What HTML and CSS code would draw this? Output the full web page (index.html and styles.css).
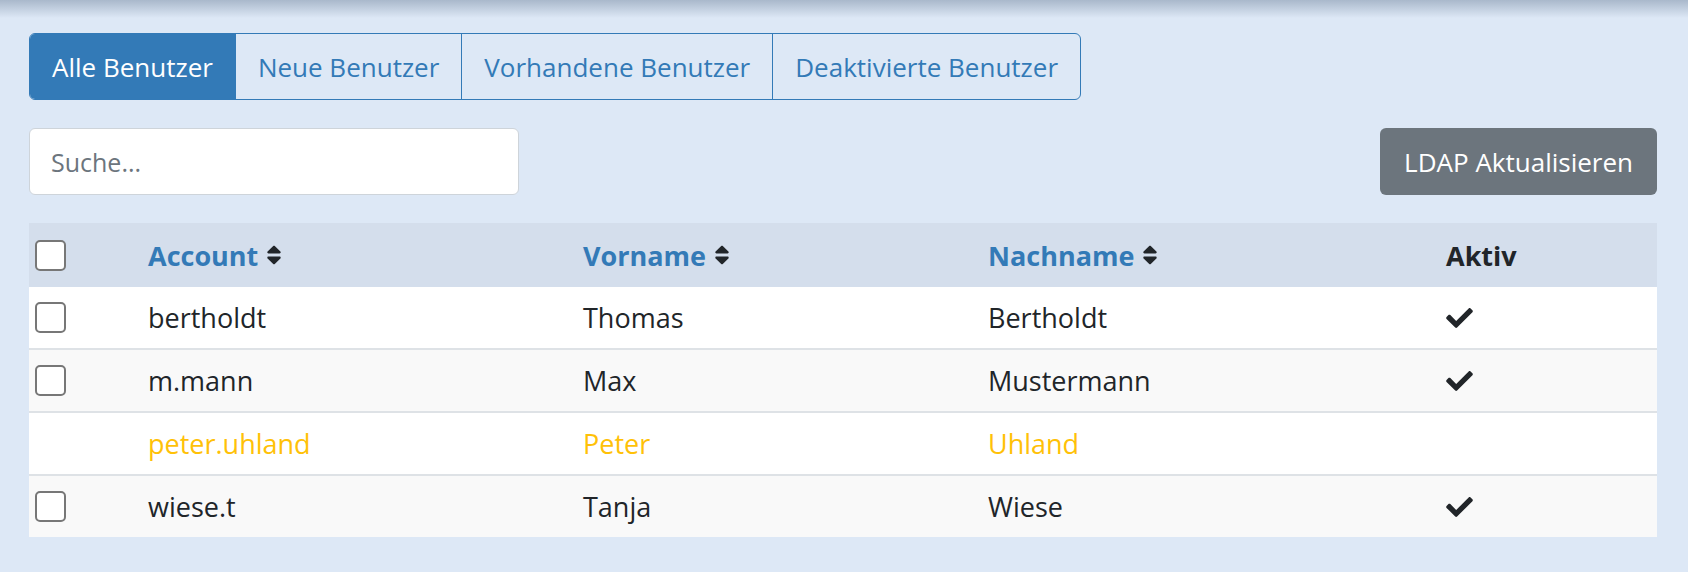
FILE: index.html
```html
<!DOCTYPE html>
<html lang="de">
<head>
  <meta charset="UTF-8" />
  <meta name="viewport" content="width=device-width, initial-scale=1.0"/>
  <title>Benutzerverwaltung</title>
  <link rel="stylesheet" href="styles.css">
</head>
<body>

  <div class="shade"></div>

  <div class="page">
    <div class="tabs">
      <button class="tab active">Alle Benutzer</button>
      <button class="tab">Neue Benutzer</button>
      <button class="tab">Vorhandene Benutzer</button>
      <button class="tab">Deaktivierte Benutzer</button>
    </div>

    <div class="toolbar">
      <input class="search" type="text" placeholder="Suche..." />
      <button class="ldap">LDAP Aktualisieren</button>
    </div>

    <table class="users">
      <colgroup>
        <col class="col-check">
        <col class="col-account">
        <col class="col-first">
        <col class="col-last">
        <col class="col-active">
      </colgroup>
      <thead>
        <tr>
          <th><span class="box"></span></th>
          <th><a class="sort">Account <svg viewBox="0 0 320 512" width="16" height="24"><path d="M41 288h238c21.4 0 32.1 25.9 17 41L177 448c-9.4 9.4-24.6 9.4-33.9 0L24 329c-15.1-15.1-4.4-41 17-41zm255-105L177 64c-9.4-9.4-24.6-9.4-33.9 0L24 183c-15.1 15.1-4.4 41 17 41h238c21.4 0 32.1-25.9 17-41z"/></svg></a></th>
          <th><a class="sort">Vorname <svg viewBox="0 0 320 512" width="16" height="24"><path d="M41 288h238c21.4 0 32.1 25.9 17 41L177 448c-9.4 9.4-24.6 9.4-33.9 0L24 329c-15.1-15.1-4.4-41 17-41zm255-105L177 64c-9.4-9.4-24.6-9.4-33.9 0L24 183c-15.1 15.1-4.4 41 17 41h238c21.4 0 32.1-25.9 17-41z"/></svg></a></th>
          <th><a class="sort">Nachname <svg viewBox="0 0 320 512" width="16" height="24"><path d="M41 288h238c21.4 0 32.1 25.9 17 41L177 448c-9.4 9.4-24.6 9.4-33.9 0L24 329c-15.1-15.1-4.4-41 17-41zm255-105L177 64c-9.4-9.4-24.6-9.4-33.9 0L24 183c-15.1 15.1-4.4 41 17 41h238c21.4 0 32.1-25.9 17-41z"/></svg></a></th>
          <th>Aktiv</th>
        </tr>
      </thead>
      <tbody>
        <tr>
          <td><span class="box"></span></td>
          <td>bertholdt</td>
          <td>Thomas</td>
          <td>Bertholdt</td>
          <td><svg class="check" viewBox="0 64 512 384" width="27" height="20"><path d="M173.9 439.4l-166.4-166.4c-10-10-10-26.2 0-36.2l36.2-36.2c10-10 26.2-10 36.2 0L192 312.7 432.1 72.6c10-10 26.2-10 36.2 0l36.2 36.2c10 10 10 26.2 0 36.2l-294.4 294.4c-10 10-26.2 10-36.2 0z"/></svg></td>
        </tr>
        <tr>
          <td><span class="box"></span></td>
          <td>m.mann</td>
          <td>Max</td>
          <td>Mustermann</td>
          <td><svg class="check" viewBox="0 64 512 384" width="27" height="20"><path d="M173.9 439.4l-166.4-166.4c-10-10-10-26.2 0-36.2l36.2-36.2c10-10 26.2-10 36.2 0L192 312.7 432.1 72.6c10-10 26.2-10 36.2 0l36.2 36.2c10 10 10 26.2 0 36.2l-294.4 294.4c-10 10-26.2 10-36.2 0z"/></svg></td>
        </tr>
        <tr class="pending">
          <td></td>
          <td>peter.uhland</td>
          <td>Peter</td>
          <td>Uhland</td>
          <td></td>
        </tr>
        <tr>
          <td><span class="box"></span></td>
          <td>wiese.t</td>
          <td>Tanja</td>
          <td>Wiese</td>
          <td><svg class="check" viewBox="0 64 512 384" width="27" height="20"><path d="M173.9 439.4l-166.4-166.4c-10-10-10-26.2 0-36.2l36.2-36.2c10-10 26.2-10 36.2 0L192 312.7 432.1 72.6c10-10 26.2-10 36.2 0l36.2 36.2c10 10 10 26.2 0 36.2l-294.4 294.4c-10 10-26.2 10-36.2 0z"/></svg></td>
        </tr>
      </tbody>
    </table>
  </div>

</body>
</html>
```

FILE: styles.css
```css
html, body {
  margin: 0;
  padding: 0;
  font-family: 'Open Sans', sans-serif;
  background-color: #dde8f6;
  color: #212529;
}

.shade {
  height: 18px;
  background: linear-gradient(#a9b8cb, #dde8f6);
}

.page {
  padding: 15px 31px 0 29px;
}

/* tab group */
.tabs {
  display: inline-flex;
  border: 1px solid #337ab7;
  border-radius: 6px;
  overflow: hidden;
}

.tab {
  height: 65px;
  padding: 0 22px;
  font-family: 'Open Sans', sans-serif;
  font-size: 26px;
  color: #337ab7;
  background: transparent;
  border: none;
  border-left: 1px solid #337ab7;
  cursor: pointer;
}

.tab:first-child {
  border-left: none;
}

.tab.active {
  background-color: #337ab7;
  color: white;
}

/* search + button */
.toolbar {
  display: flex;
  justify-content: space-between;
  margin-top: 28px;
}

.search {
  width: 490px;
  height: 67px;
  box-sizing: border-box;
  padding: 0 21px;
  font-family: 'Open Sans', sans-serif;
  font-size: 25px;
  color: #212529;
  background: white;
  border: 1px solid #ced4da;
  border-radius: 6px;
}

.search::placeholder {
  color: #6c757d;
}

.ldap {
  height: 67px;
  padding: 0 24px;
  font-family: 'Open Sans', sans-serif;
  font-size: 26px;
  color: white;
  background-color: #6c757d;
  border: none;
  border-radius: 6px;
  cursor: pointer;
}

/* table */
.users {
  width: 1628px;
  margin-top: 28px;
  border-collapse: collapse;
  table-layout: fixed;
  font-size: 27px;
}

.col-check { width: 107px; }
.col-account { width: 435px; }
.col-first { width: 405px; }
.col-last { width: 458px; }
.col-active { width: 223px; }

.users th,
.users td {
  padding: 0 0 0 12px;
  text-align: left;
  vertical-align: middle;
}

.users th {
  height: 64px;
  background-color: #d4deec;
  font-weight: bold;
}

.users th:first-child,
.users td:first-child {
  padding-left: 6px;
}

.users td {
  height: 61px;
  background: white;
  border-bottom: 2px solid #dee2e6;
}

.users tbody tr:nth-child(even) td {
  background: #f9f9f9;
}

.users tbody tr:last-child td {
  border-bottom: none;
}

.sort {
  display: inline-flex;
  align-items: center;
  gap: 8px;
  color: #337ab7;
  cursor: pointer;
}

.sort svg {
  fill: #212529;
}

.box {
  display: block;
  width: 27px;
  height: 27px;
  border: 2px solid #777;
  border-radius: 5px;
  background: white;
}

.check {
  display: block;
  fill: #212529;
}

.pending td {
  color: #ffc107;
}
```
